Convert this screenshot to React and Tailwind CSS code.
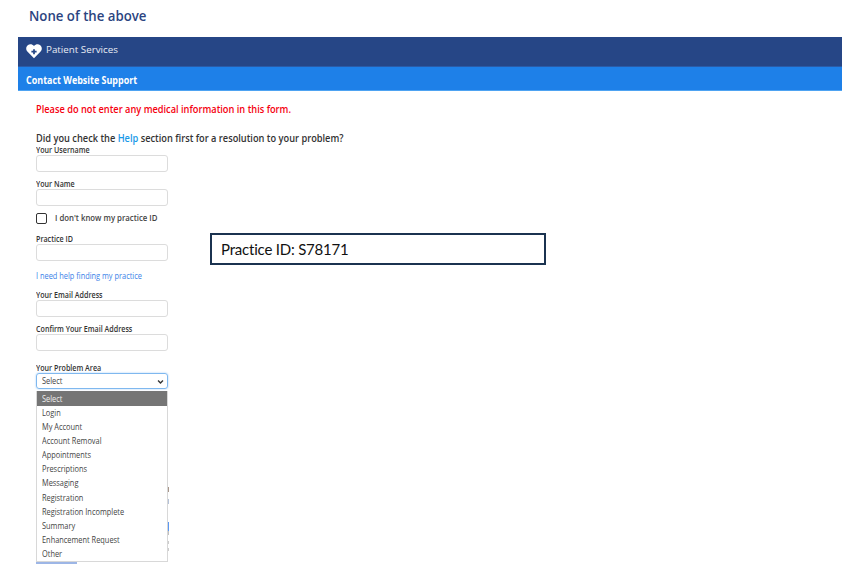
import React from 'react'

const options = ["Login","My Account","Account Removal","Appointments","Prescriptions","Messaging","Registration","Registration Incomplete","Summary","Enhancement Request","Other"]

function Field({ label, className = "" }) {
  return (
    <div className={className}>
      <label className="block origin-left scale-x-[.84] whitespace-nowrap text-[8.5px] leading-[10px] font-semibold text-[#333]">{label}</label>
      <input type="text" className="block w-[132px] h-[17px] bg-white border border-[#dcdcdc] rounded-[3px]" />
    </div>
  )
}

export default function App() {
  return (
    <div className="w-[856px] h-[570px] overflow-hidden bg-white font-['Open_Sans',sans-serif] relative">
      <h1 className="h-[37px] pl-[29px] pt-[6px] text-[14px] leading-[20px] font-semibold text-[#2b4480]"><span className="inline-block origin-left scale-x-[.944]">None of the above</span></h1>

      <div className="ml-[18px] w-[824px]">
        <div className="h-[30px] bg-[#264686] border-b border-[#2a5ba8] flex items-center pl-[8px] gap-[4px] pb-[2px]">
          <svg width="16" height="16" viewBox="0 0 24 24">
            <path fill="#fff" fillRule="evenodd" d="M12 23 2.400 13.200C-.6 10-.2 5.400 2.600 3.200 5.600.9 9.600 1.500 12 4.600c2.400-3.100 6.400-3.700 9.400-1.400 2.800 2.200 3.200 6.800.2 10z M10.700 9.200v2.600H8.100v2.600h2.600V17h2.600v-2.600h2.600v-2.600h-2.600V9.200z" />
          </svg>
          <span className="text-[9.8px] text-[#e8ecf4]">Patient Services</span>
        </div>
        <div className="h-[24px] bg-[#1e80e8] border-b border-[#4ea3f2] flex items-center pl-[8px] pt-[3px] text-[10px] font-bold text-white"><span className="origin-left scale-x-[.895]">Contact Website Support</span></div>
      </div>

      <div className="pl-[36px]">
        <p className="pt-[11px] h-[40px] text-[10px] leading-[14px] font-semibold text-[#f5000f]"><span className="inline-block origin-left scale-x-[.924]">Please do not enter any medical information in this form.</span></p>
        <p className="text-[10.5px] leading-[14px] font-semibold text-[#333]"><span className="inline-block origin-left scale-x-[.88]">Did you check the <span className="text-[#1a9ae8]">Help</span> section first for a resolution to your problem?</span></p>

        <Field label="Your Username" />
        <Field label="Your Name" className="mt-[7px]" />

        <div className="mt-[5px] h-[14px] flex items-center gap-[8px]">
          <span className="w-[11px] h-[11px] border-[1.5px] border-[#333] rounded-[2px]"></span>
          <span className="origin-left scale-x-[.865] text-[9px] font-semibold text-[#444]">I don't know my practice ID</span>
        </div>

        <Field label="Practice ID" className="mt-[9px]" />
        <p className="mt-[9px] text-[8.5px] leading-[12px] text-[#3b82e8]"><span className="inline-block origin-left scale-x-[.87]">I need help finding my practice</span></p>
        <Field label="Your Email Address" className="mt-[8px]" />
        <Field label="Confirm Your Email Address" className="mt-[7px]" />

        <div className="mt-[12px]">
          <label className="block origin-left scale-x-[.84] whitespace-nowrap text-[8.5px] leading-[10px] font-semibold text-[#333]">Your Problem Area</label>
          <div className="w-[132px] h-[16px] border border-[#7fb8ef] rounded-[3px] shadow-[0_0_2px_#9cc9f5] pl-[5px] pr-[3px] flex items-center justify-between">
            <span className="origin-left scale-x-[.87] text-[8.5px] text-[#444]">Select</span>
            <svg width="7" height="7" viewBox="0 0 10 10" fill="none" stroke="#333" strokeWidth="2"><path d="M1.500 3.500 5 7l3.500-3.500" /></svg>
          </div>
          <div className="mt-[2px] w-[132px] border border-[#d8d8d8] border-t-0 bg-white">
            <div className="h-[15px] bg-[#757575] pl-[5px] text-[8.5px] leading-[15px] text-[#eee]"><span className="inline-block origin-left scale-x-[.87]">Select</span></div>
            {options.map((o) => (
              <div key={o} className="h-[14.1px] pl-[5px] text-[8.5px] leading-[14.1px] text-[#444]"><span className="inline-block origin-left scale-x-[.87]">{o}</span></div>
            ))}
          </div>
          <div className="w-[41px] h-[2px] bg-[#9db6e6]"></div>
        </div>
      </div>

      {/* bits of the page showing past the open menu */}
      <div className="absolute left-[168px] top-[487px] w-px h-[5px] bg-[#a8968a]"></div>
      <div className="absolute left-[168px] top-[499px] w-px h-[5px] bg-[#b5c2d8]"></div>
      <div className="absolute left-[168px] top-[522px] w-px h-[9px] bg-[#5c98f2]"></div>
      <div className="absolute left-[168px] top-[531px] w-px h-[4px] bg-[#c0c0c0]"></div>
      <div className="absolute left-[168px] top-[541px] w-px h-[3px] bg-[#cccccc]"></div>
      <div className="absolute left-[168px] top-[548px] w-px h-[3px] bg-[#cccccc]"></div>

      <div className="absolute left-[210px] top-[233px] w-[336px] h-[32px] bg-white border-2 border-[#1b3350] pl-[9px] pt-[1px] flex items-center text-[15px] tracking-[-0.2px] text-[#111] font-['Lato',sans-serif]">Practice ID: S78171</div>
    </div>
  )
}
